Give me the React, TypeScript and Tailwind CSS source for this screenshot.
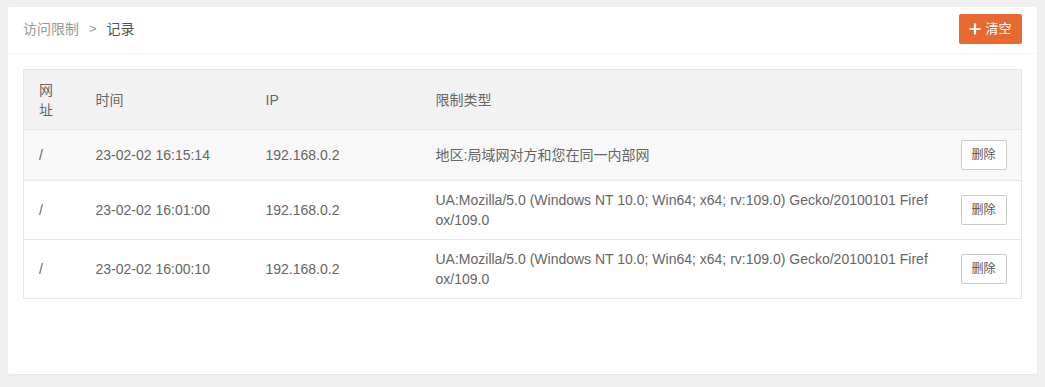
import React from "react";

const font = { fontFamily: '"Liberation Sans", Arial, "Noto Sans CJK SC", sans-serif' };

const rows = [
  { url: "/", time: "23-02-02 16:15:14", ip: "192.168.0.2", type: "地区:局域网对方和您在同一内部网", hover: true },
  { url: "/", time: "23-02-02 16:01:00", ip: "192.168.0.2", type: "UA:Mozilla/5.0 (Windows NT 10.0; Win64; x64; rv:109.0) Gecko/20100101 Firefox/109.0" },
  { url: "/", time: "23-02-02 16:00:10", ip: "192.168.0.2", type: "UA:Mozilla/5.0 (Windows NT 10.0; Win64; x64; rv:109.0) Gecko/20100101 Firefox/109.0" },
];

export default function App() {
  return (
    <div className="w-[1045px] h-[387px] bg-[#f0f0f0] pt-[7px] px-[8px]" style={font}>
      <div className="h-[367px] bg-white rounded-[2px] shadow-[0_1px_2px_rgba(0,0,0,0.05)]">
        <div className="h-[47px] flex items-start justify-between px-[15px] pt-[7px] border-b border-[#f6f6f6]">
          <div className="flex items-center h-[30px] text-[14px] leading-[20px]">
            <span className="text-[#999]">访问限制</span>
            <span className="text-[#999] mx-[10px] text-[13px]">&gt;</span>
            <span className="text-[#555]">记录</span>
          </div>
          <button className="h-[30px] w-[63px] bg-[#e8692f] text-white rounded-[2px] flex items-center justify-center gap-[4px] text-[13px]">
            <svg width="12" height="12" viewBox="0 0 12 12">
              <path d="M6 0.5V11.5M0.5 6H11.5" stroke="white" strokeWidth="2.2" />
            </svg>
            <span>清空</span>
          </button>
        </div>
        <div className="p-[15px]">
          <table className="w-full table-fixed border-collapse border border-[#e6e6e6] text-[14px] leading-[20px] text-[#666]">
            <colgroup>
              <col className="w-[57px]" />
              <col className="w-[170px]" />
              <col className="w-[170px]" />
              <col className="w-[525px]" />
              <col />
            </colgroup>
            <thead>
              <tr className="bg-[#f2f2f2] border-b border-[#e6e6e6]">
                <th className="px-[15px] pt-[10px] pb-[9px] text-left font-normal">网址</th>
                <th className="px-[15px] pt-[10px] pb-[9px] text-left font-normal">时间</th>
                <th className="px-[15px] pt-[10px] pb-[9px] text-left font-normal">IP</th>
                <th className="px-[15px] pt-[10px] pb-[9px] text-left font-normal">限制类型</th>
                <th className="px-[15px] pt-[10px] pb-[9px] text-left font-normal"></th>
              </tr>
            </thead>
            <tbody>
              {rows.map((r, i) => (
                <tr key={i} className={`border-b border-[#e6e6e6] ${r.hover ? "bg-[#f8f8f8]" : "bg-white"}`}>
                  <td className="px-[15px] py-[9px]">{r.url}</td>
                  <td className="px-[15px] py-[9px]">{r.time}</td>
                  <td className="px-[15px] py-[9px]">{r.ip}</td>
                  <td className="px-[15px] py-[9px] break-all">{r.type}</td>
                  <td className="px-[15px] py-[10px] text-right">
                    <button className="block ml-auto h-[30px] w-[46px] border border-[#c9c9c9] bg-white text-[#555] text-[12px] rounded-[2px]">
                      删除
                    </button>
                  </td>
                </tr>
              ))}
            </tbody>
          </table>
        </div>
      </div>
    </div>
  );
}
